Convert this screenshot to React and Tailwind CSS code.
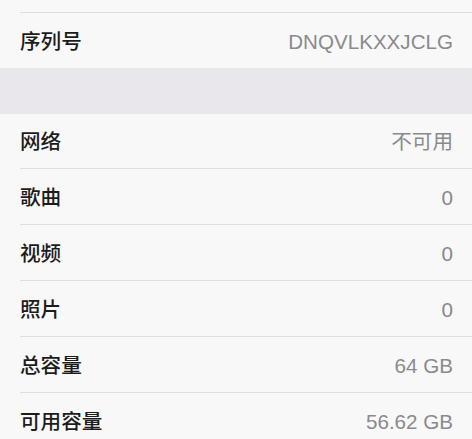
import React from 'react';

const rows = [
  { label: '网络', value: '不可用' },
  { label: '歌曲', value: '0' },
  { label: '视频', value: '0' },
  { label: '照片', value: '0' },
  { label: '总容量', value: '64 GB' },
  { label: '可用容量', value: '56.62 GB' },
];

function Row({ label, value, first, last }) {
  return (
    <div className="pl-5 bg-[#f8f8f8]">
      <div
        className={`flex items-center justify-between pr-[19px] pt-[3px] ${first ? 'h-[55px]' : 'h-[56px]'} ${
          last ? '' : 'border-b border-[#dedede]'
        }`}
      >
        <span className="text-[20.6px] text-[#1c1c1c] font-medium">{label}</span>
        <span className="text-[20.6px] text-[#8a8a8e]">{value}</span>
      </div>
    </div>
  );
}

export default function App() {
  return (
    <div
      className="w-[472px] h-[439px] overflow-hidden bg-[#f8f8f8]"
      style={{ fontFamily: '"Liberation Sans", "Noto Sans CJK SC", sans-serif' }}
    >
      {/* tail of the row above */}
      <div className="pl-5">
        <div className="h-[13px] border-b border-[#dedede]" />
      </div>
      <div className="pl-5">
        <div className="h-[55px] flex items-center justify-between pr-[19px] pt-[4px]">
          <span className="text-[20.6px] text-[#1c1c1c] font-medium">序列号</span>
          <span className="text-[20.6px] text-[#8a8a8e]">DNQVLKXXJCLG</span>
        </div>
      </div>
      <div className="h-[46px] bg-[#e9e7eb]" />
      {rows.map((r, i) => (
        <Row
          key={r.label}
          label={r.label}
          value={r.value}
          first={i === 0}
          last={i === rows.length - 1}
        />
      ))}
    </div>
  );
}
